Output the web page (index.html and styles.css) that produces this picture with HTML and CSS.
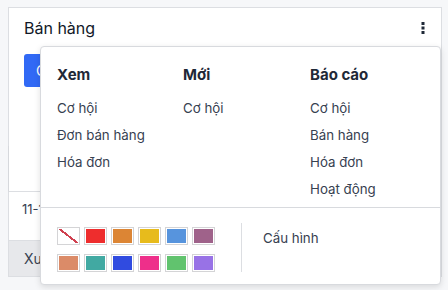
FILE: index.html
```html
<!DOCTYPE html>
<html lang="vi">
  <head>
    <meta charset="utf-8">
    <meta name="viewport" content="width=device-width, initial-scale=1.0">
    <title>Bán hàng</title>
    <link rel="stylesheet" href="styles.css">
  </head>
  <body>
    <!-- Thẻ bảng điều khiển phía sau -->
    <div class="card">
      <div class="card-header">
        <span class="card-title">Bán hàng</span>
        <svg class="kebab" width="4" height="12" viewBox="0 0 4 12">
          <rect x="0.5" y="0" width="3" height="3" fill="#1f2937"/>
          <rect x="0.5" y="4.5" width="3" height="3" fill="#1f2937"/>
          <rect x="0.5" y="9" width="3" height="3" fill="#1f2937"/>
        </svg>
      </div>
      <div class="card-body">
        <button class="btn-primary">Cơ hội mới</button>
      </div>
      <div class="card-table">
        <div class="table-gap"></div>
        <div class="table-row">11-10-2024</div>
      </div>
      <div class="card-footer">Xuất</div>
    </div>

    <!-- Menu thả xuống -->
    <div class="dropdown">
      <div class="menu-cols">
        <div class="menu-col">
          <div class="menu-head">Xem</div>
          <a class="menu-item">Cơ hội</a>
          <a class="menu-item">Đơn bán hàng</a>
          <a class="menu-item">Hóa đơn</a>
        </div>
        <div class="menu-col">
          <div class="menu-head">Mới</div>
          <a class="menu-item">Cơ hội</a>
        </div>
        <div class="menu-col">
          <div class="menu-head">Báo cáo</div>
          <a class="menu-item">Cơ hội</a>
          <a class="menu-item">Bán hàng</a>
          <a class="menu-item">Hóa đơn</a>
          <a class="menu-item">Hoạt động</a>
        </div>
      </div>
      <div class="menu-footer">
        <div class="colorlist">
          <span class="swatch swatch-none"></span>
          <span class="swatch" style="--c:#ee2d2d"></span>
          <span class="swatch" style="--c:#dc8534"></span>
          <span class="swatch" style="--c:#e7bb1c"></span>
          <span class="swatch" style="--c:#5794dd"></span>
          <span class="swatch" style="--c:#9f628a"></span>
          <span class="swatch" style="--c:#db8b68"></span>
          <span class="swatch" style="--c:#41a9a2"></span>
          <span class="swatch" style="--c:#304be0"></span>
          <span class="swatch" style="--c:#ee2f8a"></span>
          <span class="swatch" style="--c:#61c36e"></span>
          <span class="swatch" style="--c:#9872e6"></span>
        </div>
        <div class="footer-sep"></div>
        <a class="menu-item config">Cấu hình</a>
      </div>
    </div>
  </body>
</html>
```

FILE: styles.css
```css
* {
  box-sizing: border-box;
}
html, body {
  margin: 0;
  padding: 0;
}
body {
  background-color: #f6f7f9;
  font-family: Inter, "Noto Sans", sans-serif;
  color: #1f2937;
  padding: 7px 6px 13px 8px;
  position: relative;
  height: 290px;
  overflow: hidden;
}

/* thẻ phía sau */
.card {
  background: #fff;
  border: 1px solid #dcdee2;
  height: 270px;
  display: flex;
  flex-direction: column;
}
.card-header {
  display: flex;
  justify-content: space-between;
  align-items: center;
  padding: 10px 15px 0 15px;
  height: 32px;
}
.card-title {
  font-size: 16px;
  color: #111827;
}
.kebab {
  display: block;
  margin-right: 1px;
}
.card-body {
  padding: 16px 15px 0;
  height: 135px;
}
.btn-primary {
  background: #3169f5;
  color: #fff;
  border: 0;
  border-radius: 3px;
  height: 33px;
  padding: 0 12px;
  font-family: inherit;
  font-size: 14px;
}
.card-table {
  flex: 1;
  display: flex;
  flex-direction: column;
}
.table-gap {
  height: 46px;
  border-left: 1px solid #d6d8dc;
  margin-left: -1px;
  border-bottom: 1px solid #dcdee2;
}
.table-row {
  height: 49px;
  padding: 9px 13px;
  font-size: 13px;
  color: #374151;
  border-bottom: 1px solid #dcdee2;
}
.card-footer {
  background: #e7e8eb;
  height: 38px;
  padding: 9px 15px;
  font-size: 14px;
  color: #374151;
}

/* menu thả xuống */
.dropdown {
  position: absolute;
  left: 40px;
  top: 46px;
  width: 401px;
  height: 239px;
  background: #fff;
  border: 1px solid #d8dade;
  border-radius: 4px;
  box-shadow: 0 2px 6px rgba(0, 0, 0, 0.12);
}
.menu-cols {
  display: grid;
  grid-template-columns: 126px 127px 1fr;
  padding: 17px 0 4px 16px;
  height: 161px;
  border-bottom: 1px solid #d8dade;
}
.menu-col {
  display: flex;
  flex-direction: column;
}
.menu-head {
  font-size: 15px;
  font-weight: 700;
  line-height: 22px;
  color: #1f2937;
  margin-bottom: 9px;
}
.menu-item {
  font-size: 13.3px;
  line-height: 27px;
  color: #374151;
}
.menu-footer {
  display: flex;
  align-items: flex-start;
  padding: 14px 0 0 16px;
}
.colorlist {
  display: grid;
  grid-template-columns: repeat(6, 23px);
  column-gap: 4px;
  row-gap: 9px;
  padding-top: 5px;
}
.swatch {
  display: block;
  width: 23px;
  height: 18px;
  border: 1px solid #d4d4d6;
  padding: 1px;
  background: var(--c);
  background-clip: content-box;
}
.swatch-none {
  background: linear-gradient(to top right, #fff calc(50% - 1px), #d0404f calc(50% - 1px), #d0404f calc(50% + 1px), #fff calc(50% + 1px));
  background-clip: content-box;
}
.footer-sep {
  width: 1px;
  height: 49px;
  background: #dcdee2;
  margin: 1px 0 0 26px;
}
.config {
  padding-left: 21px;
  line-height: 20px;
  margin-top: 6px;
}
```
